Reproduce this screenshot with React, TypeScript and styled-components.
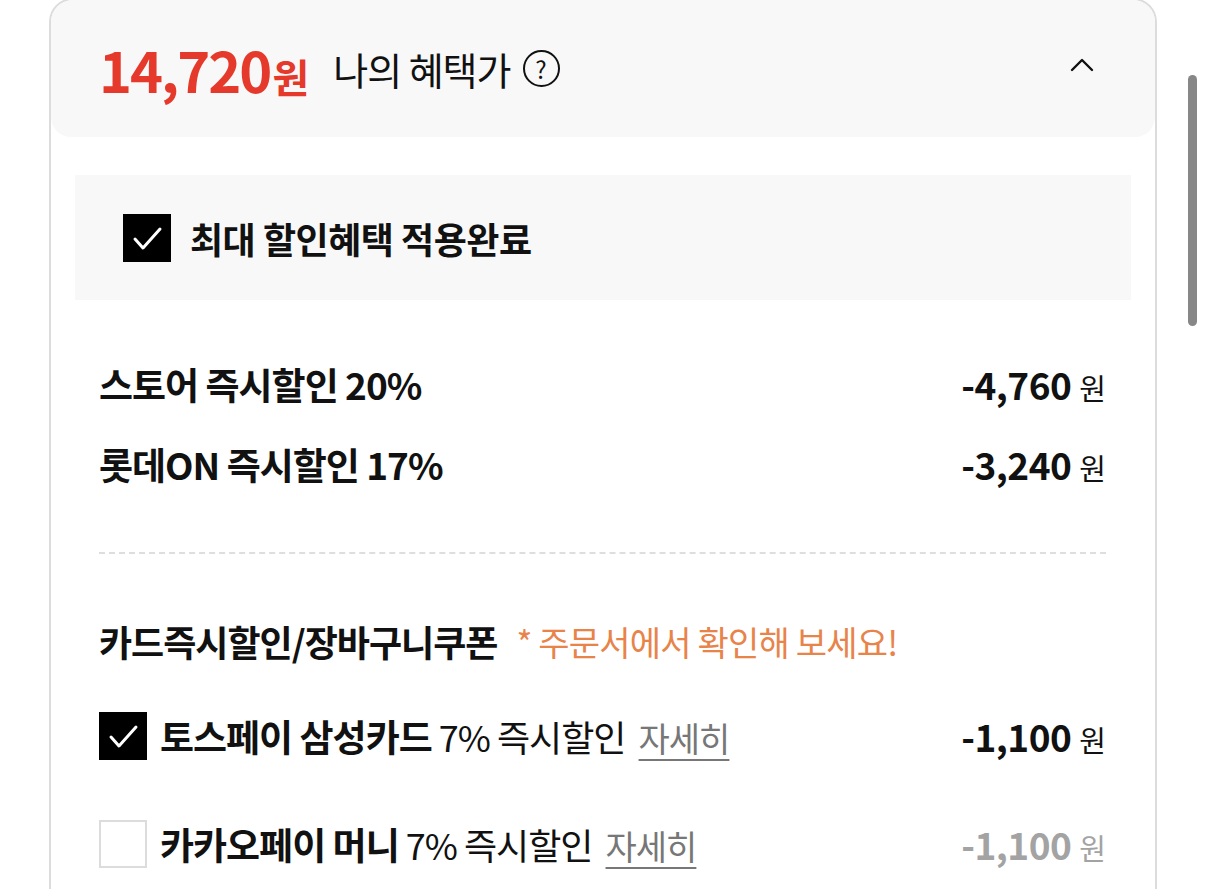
import * as React from 'react';
import styled, { createGlobalStyle } from 'styled-components';

const GlobalStyle = createGlobalStyle`
html, body {
margin: 0;
padding: 0;
background: #fff;
overflow: hidden;
}
body {
font-family: "Noto Sans CJK KR", "Noto Sans", sans-serif;
color: #111;
}
`

interface Discount {
    label: string;
    amount: string;
}

interface CardOffer {
    name: string;
    rate: string;
    amount: string;
    checked: boolean;
}

const discounts: Discount[] = [
    { label: '스토어 즉시할인 20%', amount: '-4,760' },
    { label: '롯데ON 즉시할인 17%', amount: '-3,240' },
];

const offers: CardOffer[] = [
    { name: '토스페이 삼성카드', rate: '7% 즉시할인', amount: '-1,100', checked: true },
    { name: '카카오페이 머니', rate: '7% 즉시할인', amount: '-1,100', checked: false },
];

function CheckBox({ checked }: { checked: boolean }) {
    return <Box $checked={checked}>
        {checked &&
            <svg width="48" height="48" viewBox="0 0 48 48">
                <polyline points="12,25 20,34 37,15" fill="none" stroke="#fff" strokeWidth="3" strokeLinecap="round" strokeLinejoin="round" />
            </svg>}
    </Box>
}

export default function App() {
    return <>
        <GlobalStyle />
        <Page>
            <Card>
                <Header>
                    <Price>14,720<small>원</small></Price>
                    <HeaderLabel>나의 혜택가</HeaderLabel>
                    <HelpIcon>?</HelpIcon>
                    <Toggle>
                        <svg width="26" height="16" viewBox="0 0 26 16">
                            <polyline points="3,13 13,3 23,13" fill="none" stroke="#111" strokeWidth="2.4" strokeLinecap="round" strokeLinejoin="round" />
                        </svg>
                    </Toggle>
                </Header>
                <Body>
                    <Applied>
                        <CheckBox checked={true} />
                        <AppliedText>최대 할인혜택 적용완료</AppliedText>
                    </Applied>
                    <Section>
                        {discounts.map(d => (
                            <DiscountRow key={d.label}>
                                <DiscountLabel>{d.label}</DiscountLabel>
                                <Amount>{d.amount}<Won>원</Won></Amount>
                            </DiscountRow>
                        ))}
                        <Divider />
                        <SectionTitle>
                            카드즉시할인/장바구니쿠폰
                            <Note>* 주문서에서 확인해 보세요!</Note>
                        </SectionTitle>
                        {offers.map(o => (
                            <OfferRow key={o.name}>
                                <CheckBox checked={o.checked} />
                                <OfferText>
                                    <b>{o.name}</b> {o.rate} <Detail>자세히</Detail>
                                </OfferText>
                                <Amount $muted={!o.checked}>{o.amount}<Won>원</Won></Amount>
                            </OfferRow>
                        ))}
                    </Section>
                </Body>
            </Card>
            <ScrollThumb />
        </Page>
    </>
}

const Page = styled.div`
position: relative;
width: 1206px;
height: 889px;
overflow: hidden;
`

const Card = styled.div`
margin: -2px 0 0 49px;
width: 1104px;
height: 960px;
border: 2px solid #dcdcdc;
border-bottom: none;
border-radius: 24px 24px 0 0;
`

const Header = styled.div`
display: flex;
align-items: center;
height: 137px;
padding: 0 60px 0 48px;
background: #f8f8f8;
border-radius: 22px 22px 20px 20px;
`

const Price = styled.span`
color: #e5392b;
font-weight: 700;
font-size: 56px;
letter-spacing: -2px;
small {
font-size: 40px;
letter-spacing: 0;
margin-left: 2px;
}
`

const HeaderLabel = styled.span`
margin-left: 24px;
font-size: 38px;
letter-spacing: -1px;
color: #111;
`

const HelpIcon = styled.span`
display: inline-flex;
align-items: center;
justify-content: center;
margin-left: 12px;
width: 33px;
height: 33px;
border: 2px solid #111;
border-radius: 50%;
font-size: 24px;
line-height: 1;
`

const Toggle = styled.span`
margin-left: auto;
margin-bottom: 8px;
display: flex;
`

const Body = styled.div`
padding: 38px 24px 0 24px;
`

const Applied = styled.div`
display: flex;
align-items: center;
gap: 19px;
height: 125px;
padding-left: 48px;
background: #f8f8f8;
`

const AppliedText = styled.span`
font-size: 36px;
font-weight: 700;
letter-spacing: -0.5px;
`

const Box = styled.span<{ $checked: boolean }>`
flex: none;
display: flex;
box-sizing: border-box;
width: 48px;
height: 48px;
background: ${p => p.$checked ? '#000' : '#fff'};
border: ${p => p.$checked ? 'none' : '2px solid #dcdcdc'};
`

const Section = styled.div`
padding: 44px 25px 0 24px;
`

const DiscountRow = styled.div`
display: flex;
align-items: center;
justify-content: space-between;
height: 80px;
`

const DiscountLabel = styled.span`
font-size: 37px;
font-weight: 700;
letter-spacing: -1px;
`

const Amount = styled.span<{ $muted?: boolean }>`
display: flex;
align-items: baseline;
font-size: 37px;
font-weight: 700;
letter-spacing: -0.5px;
color: ${p => p.$muted ? '#a3a3a3' : '#111'};
`

const Won = styled.span`
margin-left: 8px;
font-size: 29px;
font-weight: 400;
letter-spacing: 0;
`

const Divider = styled.div`
margin-top: 48px;
border-top: 2px dashed #dedede;
`

const SectionTitle = styled.div`
display: flex;
align-items: center;
height: 50px;
margin: 62px 0 16px;
font-size: 36px;
font-weight: 700;
letter-spacing: -1px;
`

const Note = styled.span`
margin-left: 19px;
color: #e8834a;
font-weight: 400;
font-size: 34px;
letter-spacing: -0.8px;
`

const OfferRow = styled.div`
display: flex;
align-items: center;
height: 108px;
`

const OfferText = styled.span`
flex: 1;
margin-left: 13px;
font-size: 36px;
letter-spacing: -1px;
b {
font-weight: 700;
font-size: 37px;
}
`

const Detail = styled.span`
margin-left: 6px;
color: #777;
font-size: 34px;
text-decoration: underline;
text-underline-offset: 7px;
text-decoration-thickness: 2px;
`

const ScrollThumb = styled.div`
position: absolute;
left: 1188px;
top: 75px;
width: 9px;
height: 251px;
border-radius: 5px;
background: #878787;
`
